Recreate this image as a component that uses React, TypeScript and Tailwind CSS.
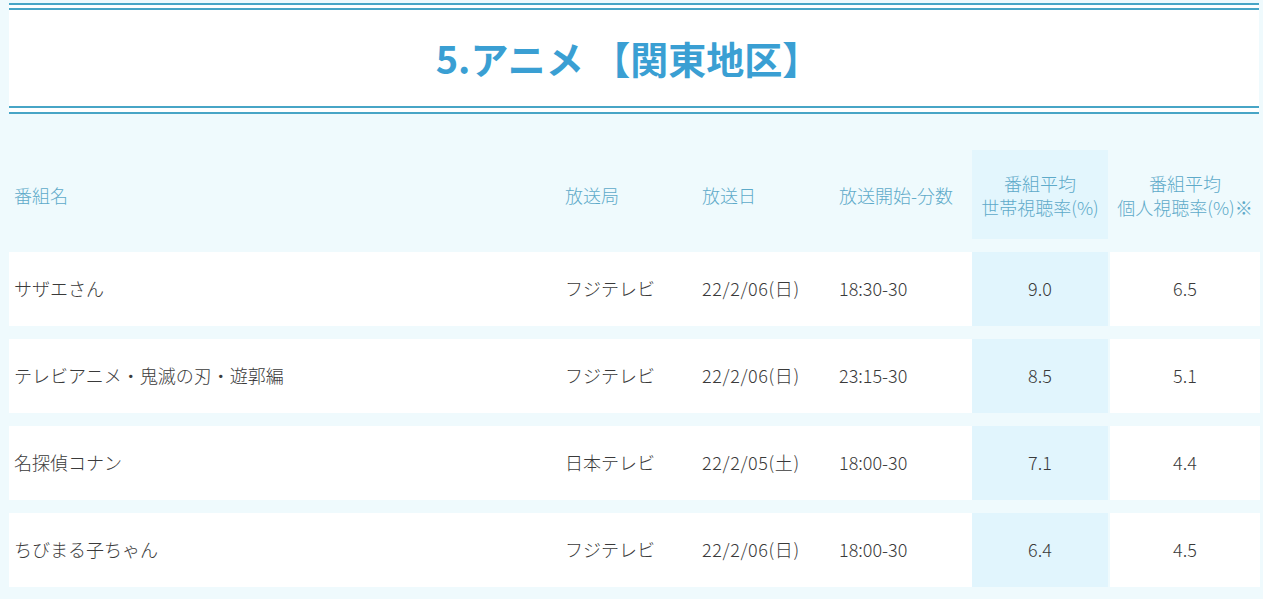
import React from "react";

const rows = [
  { name: "サザエさん", st: "フジテレビ", date: "22/2/06(日)", time: "18:30-30", hh: "9.0", ind: "6.5" },
  { name: "テレビアニメ・鬼滅の刃・遊郭編", st: "フジテレビ", date: "22/2/06(日)", time: "23:15-30", hh: "8.5", ind: "5.1" },
  { name: "名探偵コナン", st: "日本テレビ", date: "22/2/05(土)", time: "18:00-30", hh: "7.1", ind: "4.4" },
  { name: "ちびまる子ちゃん", st: "フジテレビ", date: "22/2/06(日)", time: "18:00-30", hh: "6.4", ind: "4.5" },
];

const grid = "grid grid-cols-[551px_137px_137px_138px_136px_2px_150px]";

export default function App() {
  return (
    <div
      className="w-[1263px] h-[599px] overflow-hidden bg-[#effafd] pt-[3px]"
      style={{ fontFamily: '"Noto Sans CJK JP", "Noto Sans", sans-serif' }}
    >
      <div className="ml-[9px] w-[1250px]">
        <div className="border-t-2 border-[#47a5c6] bg-white h-[5px]" />
        <div className="border-t-2 border-b-2 border-[#47a5c6] bg-white h-[100px] flex items-center justify-center">
          <h1 className="text-[38px] font-bold text-[#3a9fd3] leading-none pr-[12px]">
            5.アニメ 【関東地区】
          </h1>
        </div>
        <div className="border-b-2 border-[#47a5c6] bg-white h-[6px]" />
      </div>

      <div className="ml-[9px] mt-[36px] w-[1251px] flex flex-col gap-[13px]">
        <div className={`${grid} h-[89px] text-[18px] font-light text-[#5eaac9] leading-[24px]`}>
          <div className="flex items-center pl-[5px]">番組名</div>
          <div className="flex items-center pl-[5px]">放送局</div>
          <div className="flex items-center pl-[5px]">放送日</div>
          <div className="flex items-center pl-[5px]">放送開始-分数</div>
          <div className="flex flex-col items-center justify-center bg-[#e3f6fd] text-center whitespace-nowrap">
            <span>番組平均</span>
            <span>世帯視聴率(%)</span>
          </div>
          <div />
          <div className="flex flex-col items-center justify-center text-center whitespace-nowrap">
            <span>番組平均</span>
            <span>個人視聴率(%)※</span>
          </div>
        </div>
        {rows.map((r) => (
          <div key={r.name} className={`${grid} h-[74px] text-[18px] font-light text-[#3a3a3a]`}>
            <div className="flex items-center pl-[5px] pb-[2px] bg-white">{r.name}</div>
            <div className="flex items-center pl-[5px] pb-[2px] bg-white">{r.st}</div>
            <div className="flex items-center pl-[5px] pb-[2px] bg-white tracking-[0.6px]">{r.date}</div>
            <div className="flex items-center pl-[5px] pb-[2px] bg-white">{r.time}</div>
            <div className="flex items-center justify-center pb-[2px] bg-[#e1f5fd]">{r.hh}</div>
            <div />
            <div className="flex items-center justify-center pb-[2px] bg-white">{r.ind}</div>
          </div>
        ))}
      </div>
    </div>
  );
}
